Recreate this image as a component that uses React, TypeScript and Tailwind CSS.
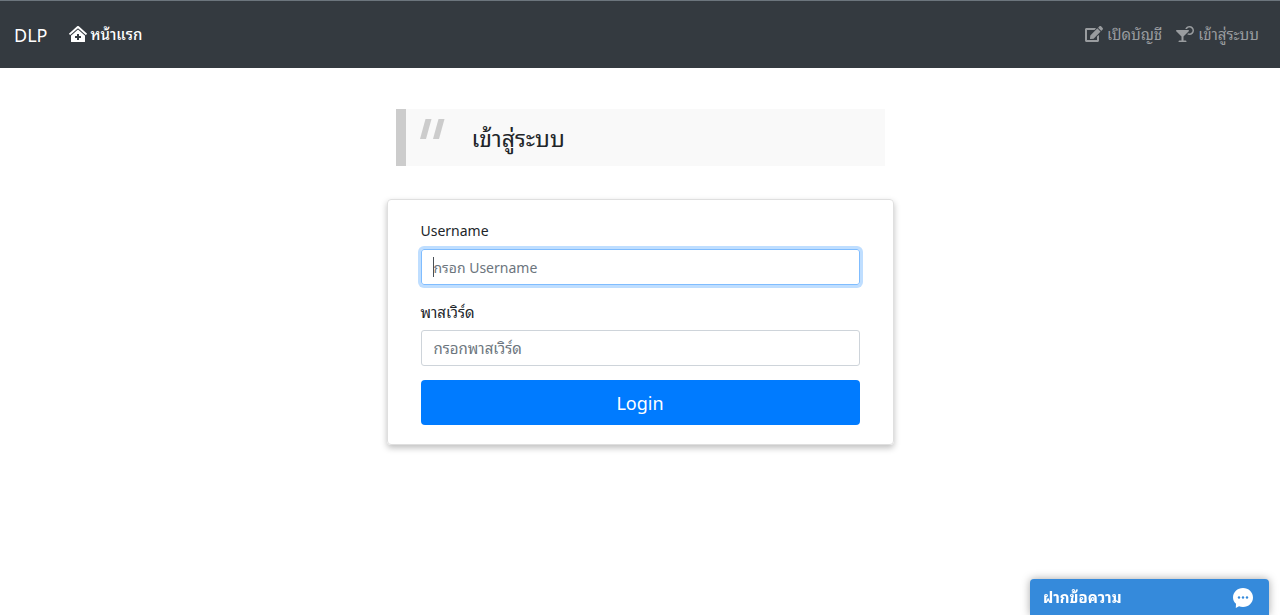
import { FaClinicMedical, FaCocktail, FaEdit } from 'react-icons/fa';

function Navbar() {
  return (
    <header className="border-t border-[#6c757d] bg-[#343a40]">
      <nav className="flex h-[67px] items-center pl-[14px] pr-[21px]">
        <a href="#" className="mr-[22px] text-lg text-white">
          DLP
        </a>
        <a href="#" className="flex items-center gap-[3px] text-[15px] font-medium text-white">
          <FaClinicMedical className="h-4 w-[18px]" />
          หน้าแรก
        </a>
        <div className="ml-auto flex items-center gap-[14px] text-[15px] text-[#999c9f]">
          <a href="#register" className="flex items-center gap-1">
            <FaEdit className="h-4 w-[18px]" />
            เปิดบัญชี
          </a>
          <a href="#login" className="flex items-center gap-1">
            <FaCocktail className="h-4 w-[18px]" />
            เข้าสู่ระบบ
          </a>
        </div>
      </nav>
    </header>
  );
}

function Heading() {
  return (
    <blockquote className="mx-[9px] flex h-[57px] border-l-[10px] border-[#ccc] bg-[#f9f9f9]">
      <svg viewBox="0 0 26 20" className="ml-[14px] mt-[10px] h-5 w-[26px] shrink-0" fill="#ccc" aria-hidden="true">
        <path d="M5.5 0H11.500L6 20H0z" />
        <path d="M18.500 0H24.500L19 20H13z" />
      </svg>
      <h1 className="ml-[26px] self-center pt-[2px] text-[23px] text-[#212529]">เข้าสู่ระบบ</h1>
    </blockquote>
  );
}

function LoginForm() {
  return (
    <form className="mt-[33px] flex flex-col rounded-sm border border-[#dfdfdf] px-[33px] pb-[19px] pt-5 shadow-[0_3px_6px_rgba(0,0,0,0.25)]">
      <label htmlFor="username" className="mb-[7px] leading-[22px]">
        Username
      </label>
      <div className="relative mb-4">
        <input
          id="username"
          type="text"
          autoFocus
          placeholder="กรอก Username"
          className="peer h-9 w-full rounded-[3px] border border-[#80bdff] px-3 shadow-[0_0_0_3px_#bfdeff] outline-none placeholder-shown:caret-transparent placeholder:text-[#6c757d]"
        />
        {/* cursor shown while the field is empty */}
        <span className="pointer-events-none absolute left-3 top-2 hidden h-5 w-px bg-[#495057] peer-placeholder-shown:block" />
      </div>
      <label htmlFor="password" className="mb-[7px] text-[15px] leading-[22px]">
        พาสเวิร์ด
      </label>
      <input
        id="password"
        type="password"
        placeholder="กรอกพาสเวิร์ด"
        className="mb-[14px] h-9 w-full rounded-[3px] border border-[#ced4da] px-3 text-[15px] outline-none placeholder:text-[#6c757d]"
      />
      <button type="submit" className="h-[45px] w-full rounded bg-[#007bff] text-lg text-white">
        Login
      </button>
    </form>
  );
}

function ChatBar() {
  return (
    <button
      type="button"
      className="fixed bottom-0 right-[11px] flex h-9 w-[239px] items-center justify-between rounded-t-sm bg-[#358adb] pl-[13px] pr-4 pt-[2px] text-[15px] font-bold text-white shadow-[0_0_8px_rgba(0,0,0,0.35)]"
    >
      ฝากข้อความ
      <svg viewBox="0 0 20 20" className="h-5 w-5" aria-hidden="true">
        <path
          fill="#fff"
          d="M10 0C15.600 0 20 4.200 20 9.500S15.600 19 10 19c-1.500 0-2.800-.2-4-.8L2.800 20l.2-4.200C1.100 14.100 0 12 0 9.500 0 4.200 4.400 0 10 0z"
        />
        <circle cx="6" cy="9.500" r="1.200" fill="#358adb" />
        <circle cx="10" cy="9.500" r="1.200" fill="#358adb" />
        <circle cx="14" cy="9.500" r="1.200" fill="#358adb" />
      </svg>
    </button>
  );
}

export default function App() {
  return (
    <div className="min-h-screen bg-white font-['Noto_Sans','Noto_Sans_Thai_Looped','Noto_Looped_Thai','Loma','Waree',sans-serif] text-sm text-[#212529]">
      <Navbar />
      <main className="mx-auto mt-[41px] w-full max-w-[507px]">
        <Heading />
        <LoginForm />
      </main>
      <ChatBar />
    </div>
  );
}
